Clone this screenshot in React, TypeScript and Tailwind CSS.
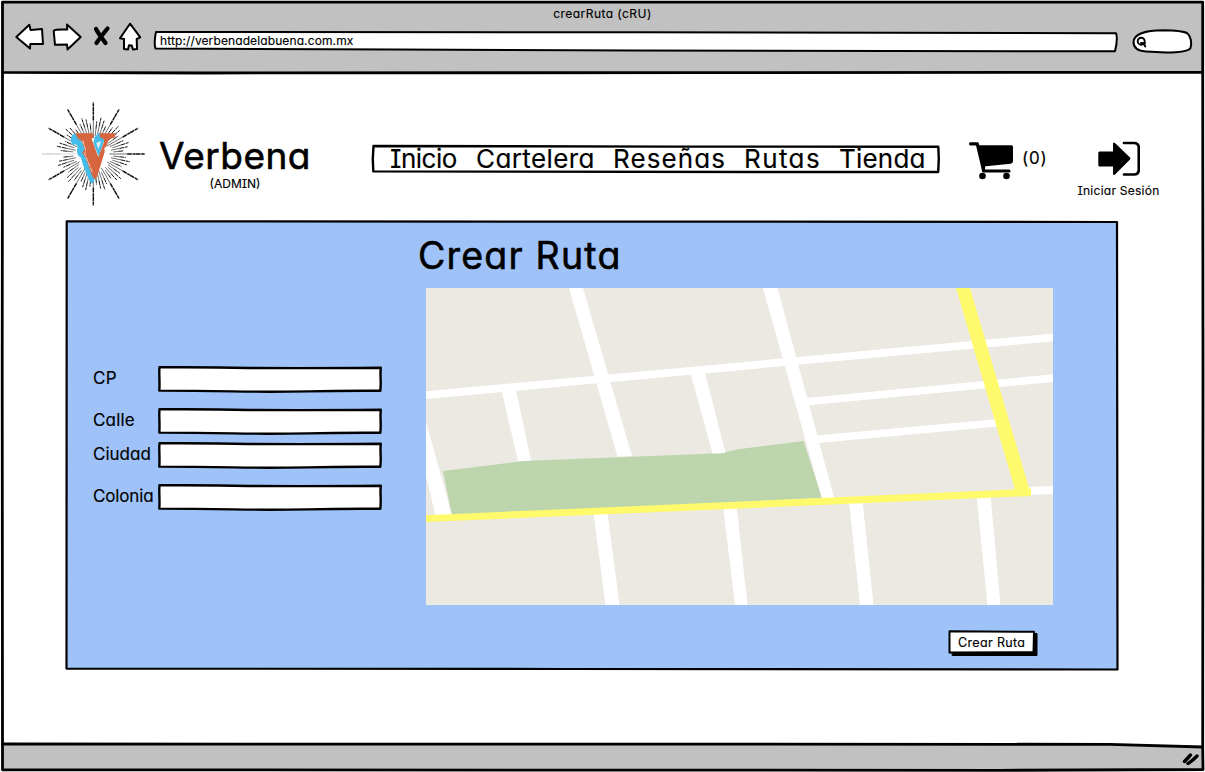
import type { ReactNode } from "react";

const FONT =
  "font-['Inter','Liberation_Sans',sans-serif] [font-feature-settings:'cv11','cv08'] [-webkit-text-stroke:0.15px_black]";

function Sketch({ w, h, d, fill = "white", stroke = 2.4 }: { w: number; h: number; d: string; fill?: string; stroke?: number }) {
  return (
    <svg className="absolute inset-0 overflow-visible" width={w} height={h} viewBox={`0 0 ${w} ${h}`} aria-hidden="true">
      <path d={d} fill={fill} stroke="black" strokeWidth={stroke} strokeLinejoin="round" strokeLinecap="round" />
    </svg>
  );
}

function Toolbar() {
  return (
    <header className="relative flex h-[73px] shrink-0 flex-col">
      <Sketch w={1205} h={73} fill="#c1c1c1" stroke={2.8} d="M2.5 2.2H1202.7V72.3L700 72.6L205 73L2.5 72.3Z" />
      <div className="relative pt-[6px] text-center text-[12px] leading-[15px] tracking-[0.45px]">crearRuta (cRU)</div>
      <div className="relative flex h-[36px] items-start">
        <svg width="150" height="36" viewBox="0 21 150 36" className="shrink-0" fill="white" stroke="black" strokeWidth="2" strokeLinejoin="round" strokeLinecap="round">
          <path d="M16.3 37L29.3 24.7L30.6 30L42 29L43 44L30.3 44L30 48.6Z" />
          <path d="M53.7 31C54 29.5 57 29.4 67.3 29.6L67 24.5L80.7 37L67.5 49.5L67 44.4L55 44.8Z" />
          <path d="M96 29C98.5 34 102 38 105.5 43M107.5 28.5C103 34 99.5 38.5 96.5 43" strokeWidth="4.2" />
          <path d="M130 23.7L140.3 37.3L136.7 39L137 49L133 49.5L131.7 45.4L129 45.2L128 49.5L124 49L124 39L120 38.3Z" />
        </svg>
        <div className="relative ml-1 mt-[10px] h-[21px] w-[963px] shrink-0">
          <Sketch w={963} h={21} stroke={2} d="M2 1C1 5 0 14 1.5 17.5L240 18.5L480 19.5L961 20.3C962.5 14 963.5 6 962 2.2L480 1.2Z" />
          <div className="relative pl-[6px] text-[12px] leading-[19px] tracking-[0.11px]">http://verbenadelabuena.com.mx</div>
        </div>
        <div className="relative ml-[15px] mt-[8px] h-[24px] w-[61px] shrink-0">
          <Sketch w={61} h={24} stroke={2} d="M1.5 13C2 4 14 1.5 31 1.2C43 1.4 52 2.4 55 4C59 7 60 14 58.5 19C56 23 44 23.5 34 23.5L14 22.4C5 22 1.5 19 1.5 13Z" />
          <svg className="relative ml-[4px] mt-[7px]" width="12" height="13" viewBox="0 0 12 13" fill="none" stroke="black" strokeWidth="1.9" strokeLinecap="round">
            <circle cx="5.2" cy="5.2" r="3.5" />
            <path d="M5 7L9 7.2M7.5 7.5L9.3 10.5" />
          </svg>
        </div>
      </div>
    </header>
  );
}

function Logo() {
  const rays = Array.from({ length: 60 }, (_, i) => i);
  return (
    <svg width="120" height="115" viewBox="0 0 360 345" className="shrink-0">
      <g stroke="#111">
        {rays.map((i) => {
          const a = (i * Math.PI) / 30;
          const long = i % 5 === 0;
          const r1 = long ? 48 : 54 + (i % 2) * 6;
          const r2 = long ? 155 : [0, 98, 112, 106, 92][i % 5];
          const c = Math.cos(a);
          const s = Math.sin(a);
          const inner = (r1 + r2) / 2;
          return (
            <g key={i} opacity={i === 30 ? 0.45 : 1}>
              <path d={`M${172 + c * r1} ${174 + s * r1}L${172 + c * inner} ${174 + s * inner}`} strokeWidth={i === 30 ? 1 : 1.8} />
              <path d={`M${172 + c * inner} ${174 + s * inner}L${172 + c * r2} ${174 + s * r2}`} strokeWidth={i === 30 ? 2 : long ? 4.4 : 3} strokeDasharray="14 2 9 1" />
            </g>
          );
        })}
      </g>
      <path d="M169 264L178 245L160 180L126 116L112 114C103 122 102 136 110 147C119 142 127 146 124 157C120 168 126 181 134 184L142 210L160 254Z" fill="#45bdea" />
      <path d="M176 124L186 112L202 112L204 134L188 182L172 140Z" fill="#45bdea" />
      <path d="M181 140L196 136L187 160Z" fill="#d9f0f7" />
      <path d="M118 112H171L173 124L167 129L187 184L204 137L203 129L192 124L190 112H237L238 124L228 127C218 130 213 137 214 148L205 157L206 168L182 246L176 249L170 244L148 184L139 170L146 160L137 134L126 129Z" fill="#d5663f" />
      <path d="M141 134L149 163L146 173L170 231" fill="none" stroke="white" strokeWidth="2" strokeDasharray="14 3" />
    </svg>
  );
}

function SiteHeader() {
  return (
    <div className="relative flex h-[125px] items-start">
      <Logo />
      <div className="ml-[2px] mt-[38px] flex w-[151px] flex-col items-center">
        <div className="w-[151px] whitespace-nowrap pl-[1px] pt-[1px] text-[37px] leading-[42px] tracking-[0.5px] [-webkit-text-stroke:0.6px_black]">Verbena</div>
        <div className="-mt-[1px] pl-[3px] text-[12px] leading-[15px]">(ADMIN)</div>
      </div>
      <nav className="relative ml-[63px] mt-[49px] h-[29px] w-[568px]">
        <Sketch w={568} h={29} stroke={2.4} d="M1.5 1L300 1.6L566.3 1.8L566.8 14L566.2 27L400 27L1.3 26.4L.8 14Z" />
        <div className="relative flex whitespace-nowrap pl-[18px] text-[26px] leading-[28px]">
          <span className="w-[86px] tracking-[-0.5px]">Inicio</span>
          <span className="w-[137px] tracking-[0.4px]">Cartelera</span>
          <span className="w-[131px] tracking-[1.1px]">Reseñas</span>
          <span className="w-[95px] tracking-[1.4px]">Rutas</span>
          <span className="tracking-[0.2px]">Tienda</span>
        </div>
      </nav>
      <div className="ml-[28px] mt-[45px] flex items-start">
        <svg width="46" height="40" viewBox="0 0 46 40">
          <path d="M2.5 2.8H9.3L15.5 29" fill="none" stroke="black" strokeWidth="3.2" strokeLinecap="round" strokeLinejoin="round" />
          <path d="M10 4.2H43.8Q45 4.3 45 6V20Q45 22.6 42.5 22.8L15.5 25.6Z" />
          <path d="M15.5 25V30H41" fill="none" stroke="black" strokeWidth="3.2" strokeLinecap="round" strokeLinejoin="round" />
          <circle cx="14.5" cy="35" r="3.3" />
          <circle cx="38.5" cy="35" r="3.3" />
        </svg>
        <div className="ml-[8px] mt-[7px] w-[25px] text-[17px] leading-[20px] tracking-[0.8px]">(0)</div>
      </div>
      <div className="ml-[30px] mt-[45px] flex w-[83px] flex-col items-center">
        <svg width="42" height="36" viewBox="0 0 42 36" className="ml-[1px]">
          <path d="M1.5 10.5H15V2.5Q15.5 .8 17 2L32 16.5Q33 17.5 32 18.5L17 33.5Q15.5 34.8 15 33V25.5H1.5Q.3 25.5 .3 24V12Q.3 10.5 1.5 10.5Z" />
          <path d="M26 2H36Q40.8 2 40.8 7V28.5Q40.8 33.5 36 33.5H26" fill="none" stroke="black" strokeWidth="2.7" strokeLinecap="round" />
        </svg>
        <div className="mt-[6px] whitespace-nowrap text-[12px] leading-[15px] tracking-[0.25px]">Iniciar Sesión</div>
      </div>
    </div>
  );
}

function Field({ label, tracking }: { label: string; tracking: string }) {
  return (
    <label className="flex h-[26px] items-center">
      <span className={`w-[65px] whitespace-nowrap pb-[2px] text-[17px] leading-[24px] ${tracking}`}>{label}</span>
      <span className="relative h-[26px] w-[224px]">
        <Sketch w={224} h={26} d="M1.5 1.3Q55 1 90 2Q150 2.4 222.8 1.8C221.8 9 223.5 16 222.3 24.8Q180 24.6 150 25.4Q110 26 75 25.4Q35 24.6 1.3 24.6C2 16 .8 8 1.5 1.3Z" />
        <input aria-label={label} className="relative h-full w-full bg-transparent px-2 text-sm outline-none" />
      </span>
    </label>
  );
}

function CityMap() {
  return (
    <svg width="627" height="317" viewBox="0 0 627 317" className="block bg-[#ebe9e1]">
      <path fill="#bcd5ac" d="M17 183L97 173L294 165.3L314 161L377.5 153L396 210L26 228Z" />
      <g fill="white">
        <path d="M143 0H157L206 168L191.5 168.5Z" />
        <path d="M0 103.3L627 45.5V53.3L0 111Z" />
        <path d="M75.5 102H90L105 172.5L92 173.3Z" />
        <path d="M264 83H278.5L299.5 165L286.5 165.5Z" />
        <path d="M0 134L14 184L26 228L9.8 229L0 188Z" />
        <path d="M337 0H351.5L408.5 211H396Z" />
        <path d="M378 110.3L627 86.3V94L380 117.5Z" />
        <path d="M390 147.5L572 131V138.5L392 155Z" />
        <path d="M600 199L627 198V206L600 207Z" />
        <path d="M167.5 225H181.5L193.5 317H179.5Z" />
        <path d="M297 218H310.5L321.5 317H309Z" />
        <path d="M423 213H436.5L447.5 317H434Z" />
        <path d="M550.5 207H564.5L574.5 317H561.5Z" />
      </g>
      <g fill="#fffa6c">
        <path d="M0 227.2L605 200.8V208L0 234Z" />
        <path d="M530 0H544L604.5 205H590Z" />
      </g>
    </svg>
  );
}

function Panel({ children }: { children: ReactNode }) {
  return (
    <section className="relative ml-[65px] h-[450px] w-[1054px]">
      <Sketch w={1054} h={450} fill="#9fc3f8" stroke={2.2} d="M1.7 .4L600 .6L1052 1L1052.5 448.5L500 448L1.5 447.6Z" />
      <div className="relative flex h-full">{children}</div>
    </section>
  );
}

export default function App() {
  return (
    <div className={`relative flex h-[772px] w-[1205px] flex-col overflow-hidden bg-white text-black ${FONT}`}>
      <Toolbar />
      <main className="relative h-[671px] shrink-0 pl-[36px] pt-[23px]">
        <Sketch w={1205} h={671} fill="none" stroke={2.8} d="M2.5 -1L2.2 300L2.5 671M1202.7 -1L1203 300L1202.7 673" />
        <SiteHeader />
        <div className="-ml-[36px]">
          <Panel>
            <form className="flex w-[361px] flex-col pl-[28px] pt-[145px]">
              <Field label="CP" tracking="tracking-[0.4px]" />
              <div className="h-4" />
              <Field label="Calle" tracking="tracking-[0.2px]" />
              <div className="h-2" />
              <Field label="Ciudad" tracking="tracking-[0px]" />
              <div className="h-4" />
              <Field label="Colonia" tracking="tracking-[-0.15px]" />
            </form>
            <div className="flex w-[627px] flex-col pt-[12px]">
              <h1 className="-ml-[8px] h-[55px] whitespace-nowrap text-[37.5px] leading-[46px] tracking-[1.2px] [-webkit-text-stroke:0.6px_black]">Crear Ruta</h1>
              <CityMap />
              <button type="button" className="relative ml-[522px] mt-[25px] h-[27px] w-[90px] text-left">
                <Sketch w={90} h={27} fill="black" stroke={1} d="M5 4L89 3.5V25.5H4.5Z" />
                <Sketch w={90} h={27} stroke={2} d="M1.5 1.3L86 1.8L85.5 22.2L1.5 22.6Z" />
                <span className="relative block whitespace-nowrap pb-[2px] pl-[10px] text-[12.5px] leading-[25px] tracking-[0.35px]">Crear Ruta</span>
              </button>
            </div>
          </Panel>
        </div>
      </main>
      <footer className="relative h-[28px] shrink-0">
        <Sketch w={1205} h={28} fill="#c1c1c1" stroke={2.8} d="M2.5 0L1110 .3L1202.7 3L1203 25.5L1000 26.3L2.5 25.8Z" />
        <svg className="absolute right-[5px] top-[8px]" width="18" height="14" viewBox="0 0 18 14" fill="none" stroke="black" strokeWidth="3.4" strokeLinecap="round">
          <path d="M2.5 9.5L8.5 3M6 11.5C9 10 12 7 15 4" />
        </svg>
      </footer>
    </div>
  );
}
